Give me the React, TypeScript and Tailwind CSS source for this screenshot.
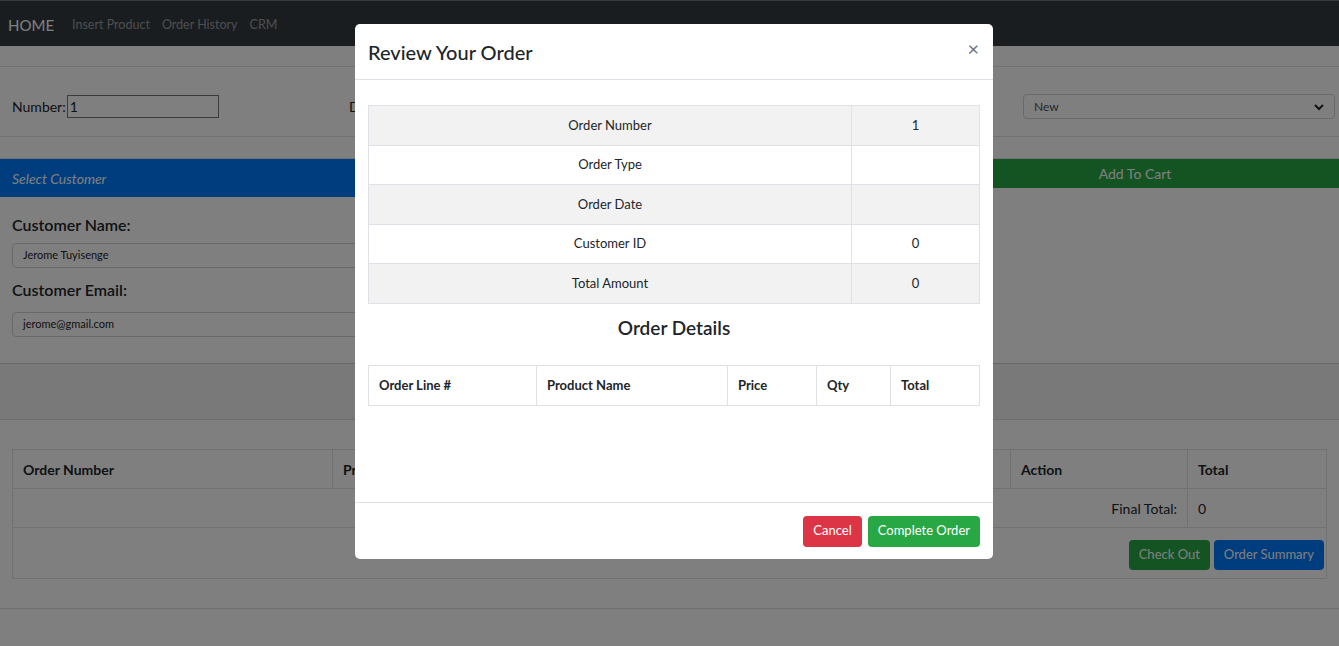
import React from 'react'

const Backdrop = () => {
  return (
    <div className="min-h-[646px] bg-white text-[#212529]">
      {/* navbar */}
      <nav className="h-[46px] bg-[#343a40] border-t border-[#6c757d] flex items-center px-2 pt-[3px] gap-[18px]">
        <span className="text-[15px] text-white">HOME</span>
        <div className="flex gap-[12px] text-[12.5px] text-white/50">
          <span>Insert Product</span>
          <span>Order History</span>
          <span>CRM</span>
        </div>
      </nav>

      <div className="h-[20px]" />
      <div className="border-t border-[#dee2e6]" />
      <div className="h-[70px] pt-[10px] flex items-center text-[14px] border-b border-[#dee2e6]">
        <div className="w-[335px] pl-3 flex items-center">
          <span>Number:</span>
          <div className="ml-[1px] w-[152px] h-[23px] border border-[#767676] px-[2px] leading-[21px]">1</div>
        </div>
        <div className="w-[335px] pl-[14px]">Date:</div>
        <div className="w-[353px]" />
        <div className="flex-1 pr-1">
          <div className="h-[25px] rounded border border-[#ced4da] flex items-center justify-between px-[10px] text-[12px] text-[#495057]">
            <span>New</span>
            <svg width="10" height="8" viewBox="0 0 10 8"><path d="M1 2l4 4 4-4" stroke="#212529" strokeWidth="2" fill="none" /></svg>
          </div>
        </div>
      </div>

      <div className="h-[21px]" />
      <div className="flex border-t border-[#dee2e6]">
        <div className="w-[931px] pb-[26px] border-b border-[#ccc]">
          <div className="h-[38px] bg-[#007bff] text-white italic text-[14px] flex items-center px-3">Select Customer</div>
          <div className="px-3">
            <div className="mt-[16px] text-[16px] font-semibold">Customer Name:</div>
            <div className="mt-[6px] h-[25px] rounded border border-[#ced4da] px-[10px] text-[11px] flex items-center">Jerome Tuyisenge</div>
            <div className="mt-[10px] text-[16px] font-semibold">Customer Email:</div>
            <div className="mt-[10px] h-[25px] rounded border border-[#ced4da] px-[10px] text-[11px] flex items-center">jerome@gmail.com</div>
          </div>
        </div>
        <div className="flex-1 border-b border-[#ccc]">
          <div className="h-[29px] bg-[#28a745] text-white text-[14px] flex items-center justify-center">Add To Cart</div>
        </div>
      </div>

      <div className="h-[56px] bg-[#f2f2f2] border-b border-[#ddd]" />

      <div className="px-3 pt-[29px] pb-[29px] border-b border-[#ddd]">
        <table className="w-full border-collapse text-[14px]">
          <thead>
            <tr className="h-[39px]">
              <th className="border border-[#dee2e6] text-left px-[10px] w-[320px]">Order Number</th>
              <th className="border border-[#dee2e6] text-left px-[10px]">Product Name</th>
              <th className="border border-[#dee2e6] text-left px-[10px] w-[177px]">Action</th>
              <th className="border border-[#dee2e6] text-left px-[10px] w-[139px]">Total</th>
            </tr>
          </thead>
          <tbody>
            <tr className="h-[39px]">
              <td colSpan={3} className="border border-[#dee2e6] text-right px-[10px]">Final Total:</td>
              <td className="border border-[#dee2e6] px-[10px]">0</td>
            </tr>
            <tr className="h-[51px]">
              <td colSpan={4} className="border border-[#dee2e6] px-[2px] pt-[3px]">
                <div className="flex justify-end gap-1">
                  <button className="h-[30px] px-[10px] rounded bg-[#28a745] text-white text-[13px]">Check Out</button>
                  <button className="h-[30px] px-[10px] rounded bg-[#007bff] text-white text-[13px]">Order Summary</button>
                </div>
              </td>
            </tr>
          </tbody>
        </table>
      </div>
    </div>
  )
}

const rows = [
  ['Order Number', '1'],
  ['Order Type', ''],
  ['Order Date', ''],
  ['Customer ID', '0'],
  ['Total Amount', '0'],
]

const App = () => {
  return (
    <div className="relative h-[646px] overflow-hidden font-['Lato',sans-serif]">
      <Backdrop />
      <div className="absolute inset-0 bg-black/50" />

      {/* modal */}
      <div className="absolute left-[355px] top-[24px] w-[638px] bg-white rounded-[5px] text-[#212529] flex flex-col">
        <div className="h-[56px] border-b border-[#dee2e6] flex items-center justify-between pl-[13px] pr-[14px]">
          <h5 className="text-[20px] font-medium">Review Your Order</h5>
          <span className="text-[20px] text-[#6c757d] leading-none -mt-[8px]">×</span>
        </div>

        <div className="px-[13px] pt-[25px] h-[422px]">
          <table className="w-full border-collapse text-[13px]">
            <tbody>
              {rows.map((r, i) => (
                <tr key={r[0]} className={i % 2 === 0 ? 'h-[39.5px] bg-[#f2f2f2]' : 'h-[39.5px]'}>
                  <td className="border border-[#dee2e6] text-center">{r[0]}</td>
                  <td className="border border-[#dee2e6] text-center w-[128px]">{r[1]}</td>
                </tr>
              ))}
            </tbody>
          </table>

          <h4 className="text-center text-[19px] font-semibold mt-[10px]">Order Details</h4>

          <table className="w-full border-collapse text-[13px] mt-[23px]">
            <thead>
              <tr className="h-[40px]">
                <th className="border border-[#dee2e6] text-left px-[10px] w-[168px]">Order Line #</th>
                <th className="border border-[#dee2e6] text-left px-[10px] w-[191px]">Product Name</th>
                <th className="border border-[#dee2e6] text-left px-[10px] w-[89px]">Price</th>
                <th className="border border-[#dee2e6] text-left px-[10px] w-[74px]">Qty</th>
                <th className="border border-[#dee2e6] text-left px-[10px]">Total</th>
              </tr>
            </thead>
          </table>
        </div>

        <div className="h-[57px] border-t border-[#dee2e6] flex items-center justify-end gap-[6px] px-[13px]">
          <button className="h-[31px] px-[10px] rounded bg-[#dc3545] text-white text-[13px]">Cancel</button>
          <button className="h-[31px] px-[10px] rounded bg-[#28a745] text-white text-[13px]">Complete Order</button>
        </div>
      </div>
    </div>
  )
}

export default App
